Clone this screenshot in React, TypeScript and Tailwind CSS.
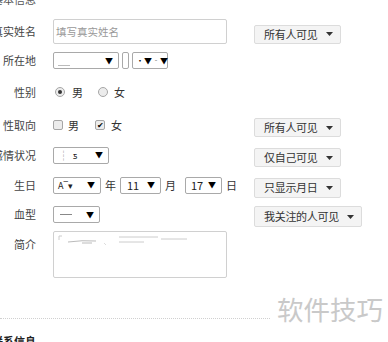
import React from 'react';

const font = { fontFamily: '"Noto Sans CJK SC", "Noto Sans", sans-serif' };

function Caret() {
    return (
        <svg width="7" height="4" viewBox="0 0 7 4" className="shrink-0">
            <path d="M0 0 L7 0 L3.5 4 Z" fill="#333" />
        </svg>
    );
}

function Privacy({ label, h = 'h-[19px]' }: { label: string, h?: string }) {
    return (
        <div className={`inline-flex items-center gap-[8px] pl-[9px] pr-[7px] ${h} border border-[#dcdcdc] rounded-[2px] bg-[#f4f4f4] text-[11px] text-[#333] leading-none`}>
            <span className="tracking-[-0.3px]">{label}</span>
            <Caret />
        </div>
    );
}

function Select({ w, children }: { w: string, children?: React.ReactNode }) {
    return (
        <div className={`flex items-center justify-between ${w} h-[17px] pl-[4px] pr-[5px] border border-[#a9a9a9] rounded-[2px] bg-white text-[11px] text-[#222] leading-none`}>
            <span className="flex items-center">{children}</span>
            <span className="text-[8px] text-black">▼</span>
        </div>
    );
}

function Label({ children }: { children: React.ReactNode }) {
    return (
        <div className="flex justify-end whitespace-nowrap text-[11px] text-[#444] leading-none">{children}</div>
    );
}

function Radio({ on }: { on?: boolean }) {
    return (
        <span className="w-[10px] h-[10px] rounded-full border border-[#a6a6a6] bg-[#ececec] flex items-center justify-center">
            {on && <span className="w-[4px] h-[4px] rounded-full bg-[#333]" />}
        </span>
    );
}

function Check({ on }: { on?: boolean }) {
    return (
        <span className="w-[10px] h-[10px] rounded-[2px] border border-[#a6a6a6] bg-[#ececec] flex items-center justify-center text-[8px] leading-none text-black">
            {on ? '✔' : ''}
        </span>
    );
}

const row = 'grid grid-cols-[36px_184px_auto] gap-x-[17px] items-center';

export default function App() {
    return (
        <div className="relative w-[388px] h-[342px] overflow-hidden bg-white" style={font}>
            <div className="w-[36px] mt-[-6px] h-[13px]">
                <div className="flex justify-end whitespace-nowrap text-[11px] text-[#555] leading-none">基本信息</div>
            </div>

            <div className={`${row} mt-[12px] h-[25px]`}>
                <Label>真实姓名</Label>
                <div className="w-[174px] h-[25px] border border-[#d0d0d0] rounded-[2px] flex items-center pl-[2px] text-[10.5px] text-[#999]">填写真实姓名</div>
                <div><Privacy label="所有人可见" /></div>
            </div>

            <div className={`${row} mt-[8px] h-[17px]`}>
                <Label>所在地</Label>
                <div className="flex items-center">
                    <Select w="w-[66px]"><span className="w-[12px] h-[1px] bg-[#bbb] mt-[10px]" /></Select>
                    <div className="ml-[3px] w-[7px] h-[17px] border border-[#a9a9a9] rounded-[2px]" />
                    <div className="ml-[3px] w-[36px] h-[17px] border border-[#a9a9a9] rounded-[2px] flex items-center justify-between px-[3px] text-[8px] leading-none">
                        <span>·▼</span><span>‐▼</span>
                    </div>
                </div>
                <div />
            </div>

            <div className={`${row} mt-[15px] h-[16px]`}>
                <Label>性别</Label>
                <div className="flex items-center text-[11px] text-[#333] leading-none">
                    <span className="ml-[2px]"><Radio on /></span>
                    <span className="ml-[7px]">男</span>
                    <span className="ml-[15px]"><Radio /></span>
                    <span className="ml-[6px]">女</span>
                </div>
                <div />
            </div>

            <div className={`${row} mt-[13px] h-[19px]`}>
                <Label>性取向</Label>
                <div className="flex items-center text-[11px] text-[#333] leading-none">
                    <Check />
                    <span className="ml-[5px]">男</span>
                    <span className="ml-[16px]"><Check on /></span>
                    <span className="ml-[6px]">女</span>
                </div>
                <div><Privacy label="所有人可见" /></div>
            </div>

            <div className={`${row} mt-[11px] h-[19px]`}>
                <Label>感情状况</Label>
                <div><Select w="w-[56px]"><span className="text-[#999]">┆</span><span className="ml-[4px] text-[9px]">ƽ</span></Select></div>
                <div><Privacy label="仅自己可见" /></div>
            </div>

            <div className={`${row} mt-[11px] h-[19px]`}>
                <Label>生日</Label>
                <div className="flex items-center text-[11px] text-[#333] leading-none">
                    <Select w="w-[50px]"><span className="text-[9px]">A‾▾</span></Select>
                    <span className="ml-[4px]">年</span>
                    <span className="ml-[4px]"><Select w="w-[41px]"><span className="ml-[2px]">11</span></Select></span>
                    <span className="ml-[4px]">月</span>
                    <span className="ml-[9px]"><Select w="w-[37px]"><span className="ml-[1px]">17</span></Select></span>
                    <span className="ml-[4px]">日</span>
                </div>
                <div><Privacy label="只显示月日" h="h-[20px]" /></div>
            </div>

            <div className={`${row} mt-[10px] h-[21px]`}>
                <Label>血型</Label>
                <div><Select w="w-[47px]"><span className="w-[12px] h-[1px] bg-[#888] ml-[2px]" /></Select></div>
                <div><Privacy label="我关注的人可见" h="h-[21px]" /></div>
            </div>

            <div className={`${row} mt-[8px] items-start`}>
                <div className="pt-[8px]"><Label>简介</Label></div>
                <div className="w-[174px] h-[47px] border border-[#d0d0d0] rounded-[2px]">
                    <svg width="172" height="20" viewBox="0 0 172 20">
                        <path d="M5 4 L5 8 M5 4 L8 4" stroke="#ccc" strokeWidth="1" fill="none" />
                        <path d="M14 10 Q 28 8 42 9 M28 11 L38 11" stroke="#bbb" strokeWidth="1" fill="none" />
                        <path d="M65 5 L104 5 M65 10 L90 10 M107 7 L133 7" stroke="#ccc" strokeWidth="1" fill="none" />
                        <path d="M50 11 L52 13" stroke="#ddd" strokeWidth="1" fill="none" />
                    </svg>
                </div>
                <div />
            </div>

            <div className="mt-[40px] w-[270px] border-t border-dotted border-[#d0d0d0]" />

            <div className="w-[36px] mt-[17px]">
                <div className="flex justify-end whitespace-nowrap text-[11px] font-bold text-[#222] leading-none">联系信息</div>
            </div>

            <div className="absolute left-[277px] top-[296px] text-[26.5px] leading-none text-[#c9c9c9]">软件技巧</div>
        </div>
    );
}
